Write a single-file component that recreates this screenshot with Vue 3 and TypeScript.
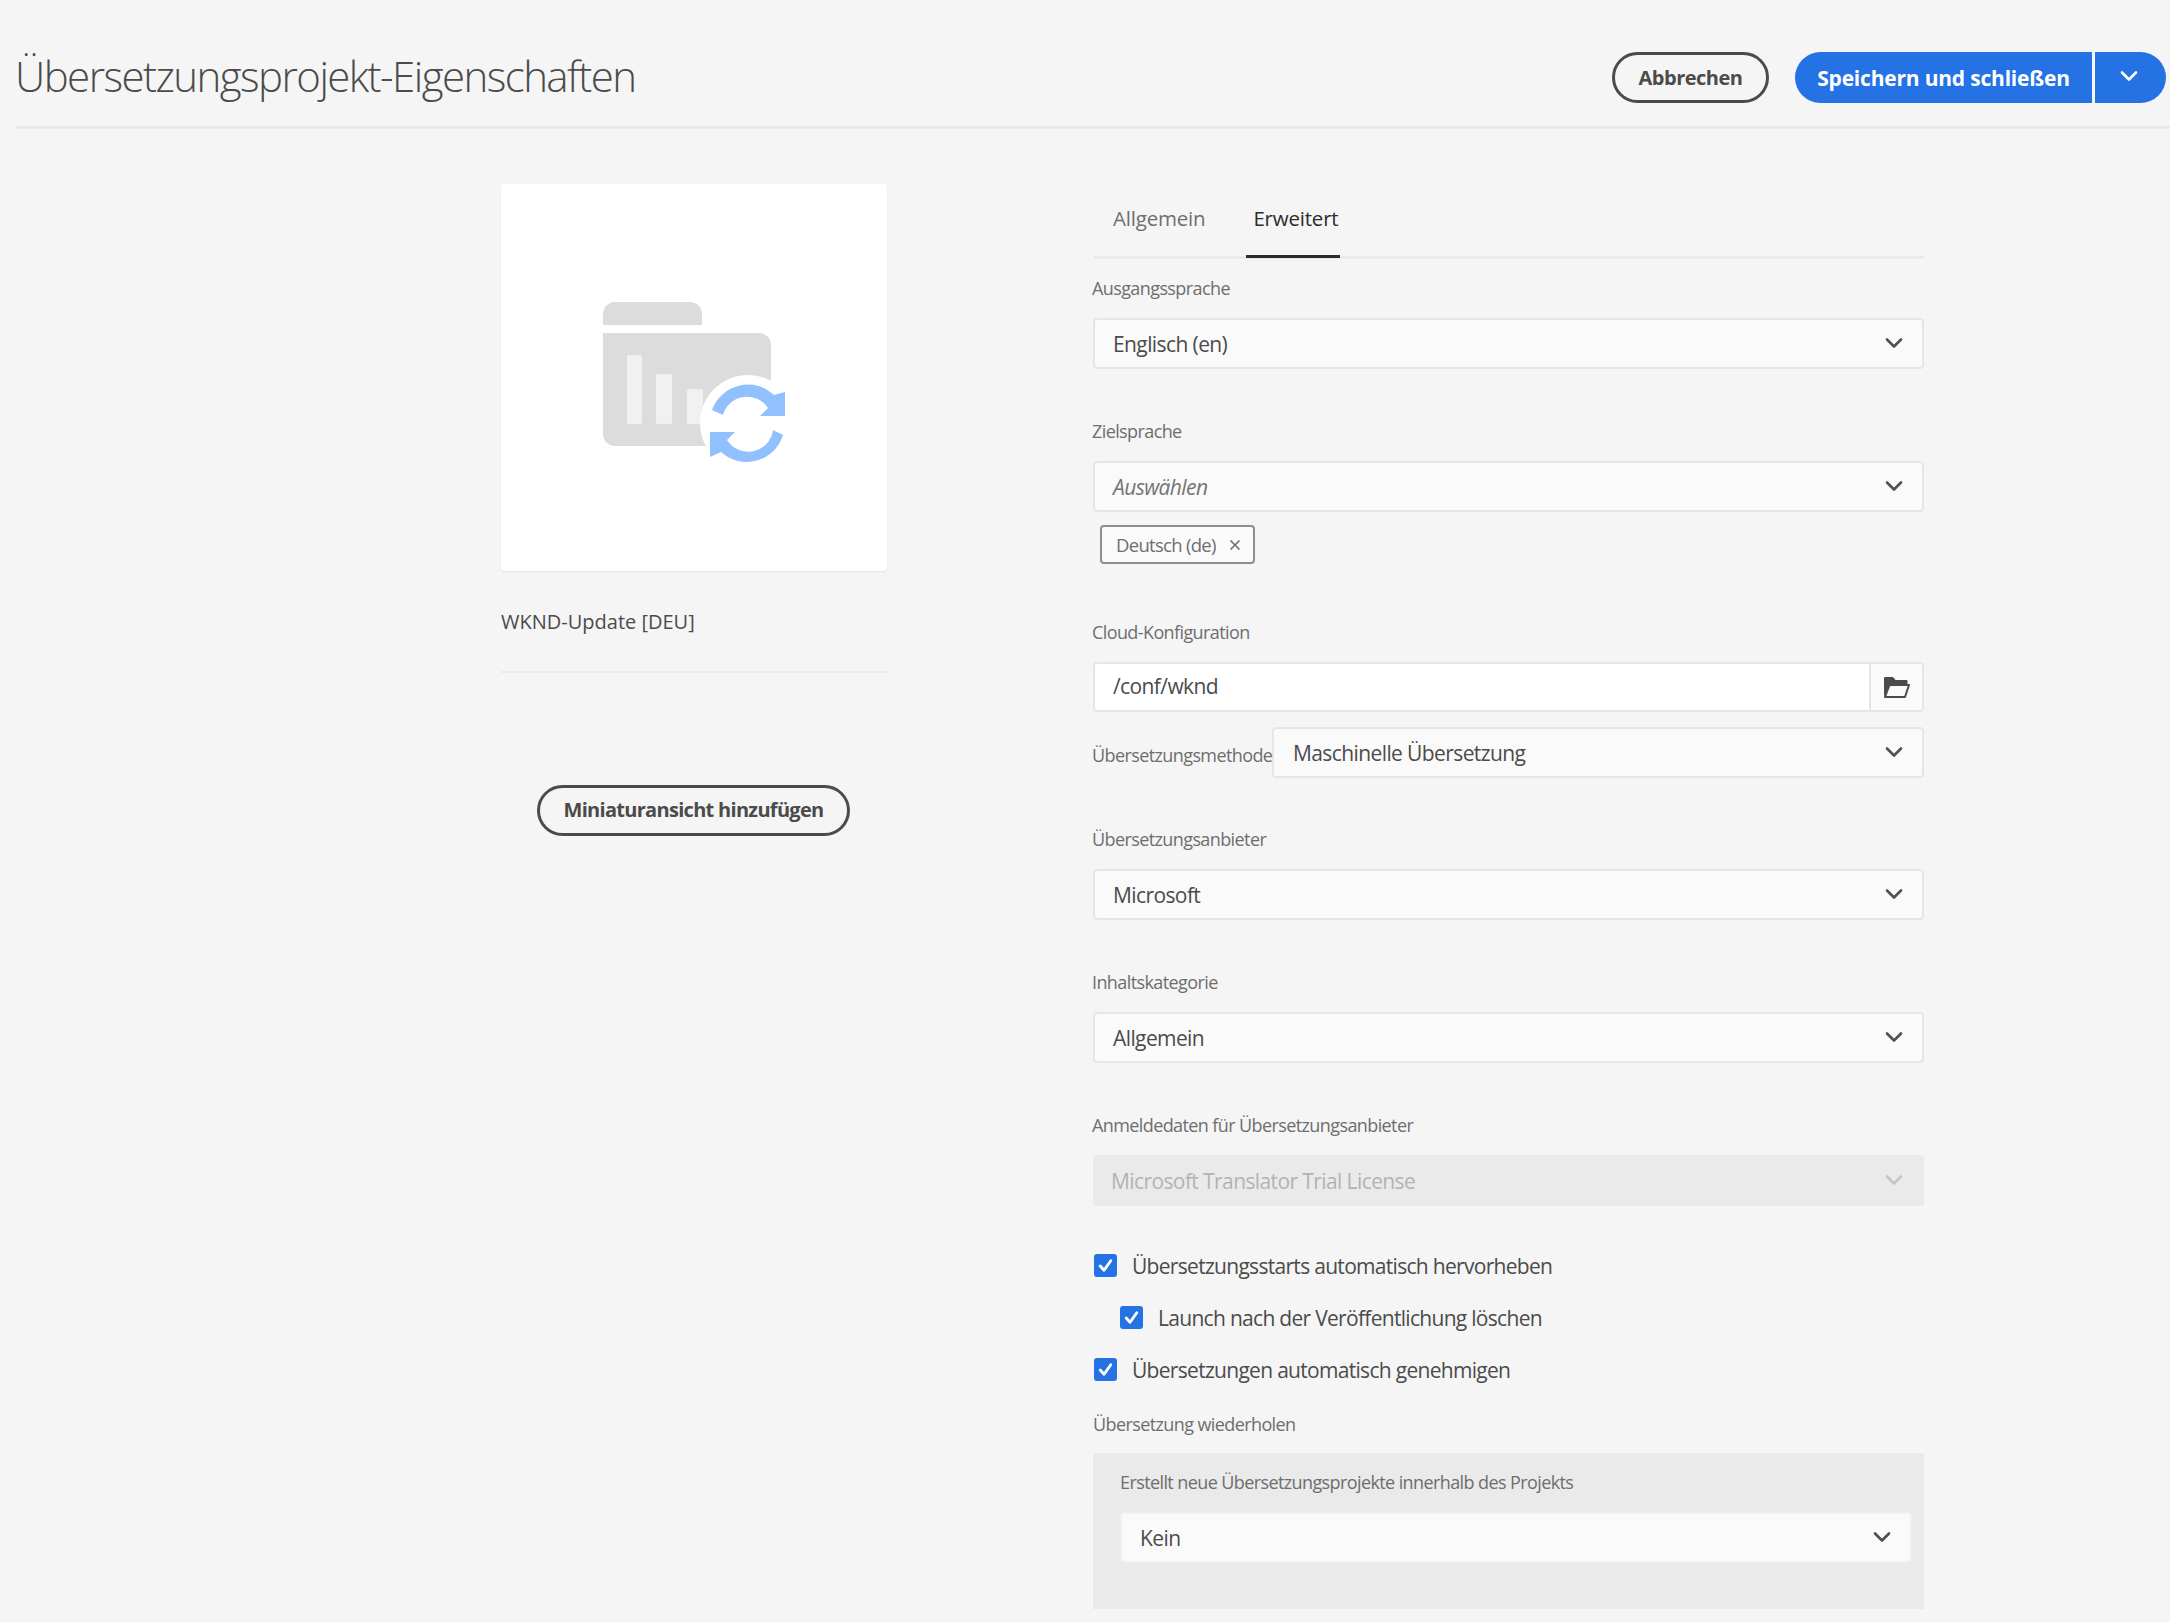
<template>
  <div class="page">
    <svg class="defs" width="0" height="0" aria-hidden="true">
      <symbol id="chevron" viewBox="0 0 18 12">
        <path d="M2 2.5 L9 9.5 L16 2.5" fill="none" stroke="currentColor" stroke-width="2.6" stroke-linecap="round" stroke-linejoin="round" />
      </symbol>
      <symbol id="check" viewBox="0 0 24 24">
        <path d="M6.5 12.5 L10.5 17 L17.5 7" fill="none" stroke="#fff" stroke-width="3" stroke-linecap="round" stroke-linejoin="round" />
      </symbol>
    </svg>

    <header class="topbar">
      <h1 class="title">Übersetzungsprojekt-Eigenschaften</h1>
      <div class="actions">
        <button class="btn btn-outline">Abbrechen</button>
        <div class="split">
          <button class="btn-primary">Speichern und schließen</button>
          <button class="btn-primary btn-caret">
            <svg width="18" height="12"><use href="#chevron" /></svg>
          </button>
        </div>
      </div>
    </header>

    <main class="content">
      <section class="side">
        <div class="thumb">
          <svg width="180" height="160" viewBox="0 0 180 160">
            <path d="M0 22 a12 12 0 0 1 12 -12 h75 a12 12 0 0 1 12 12 v11 h-99 z" fill="#dcdcdc" />
            <path d="M0 41 h156 a12 12 0 0 1 12 12 v89 a12 12 0 0 1 -12 12 h-144 a12 12 0 0 1 -12 -12 z" fill="#dcdcdc" />
            <rect x="24" y="63" width="15" height="69" rx="2" fill="#f1f1f1" />
            <rect x="53" y="82" width="16" height="50" rx="2" fill="#f1f1f1" />
            <rect x="84" y="97" width="16" height="35" rx="2" fill="#f1f1f1" />
            <circle cx="145" cy="131" r="48" fill="#fff" />
            <path d="M109 118 A38 38 0 0 1 171 103 L182 100 V124 H157 L165 116 A25 25 0 0 0 120 123 Z" fill="#91c0ff" />
            <path d="M180 143 A38 38 0 0 1 118 160 L107 165 V140 H132 L124 148 A25 25 0 0 0 170 138 Z" fill="#91c0ff" />
          </svg>
        </div>
        <p class="thumb-name">WKND-Update [DEU]</p>
        <div class="side-rule"></div>
        <button class="btn btn-outline btn-thumb">Miniaturansicht hinzufügen</button>
      </section>

      <section class="form">
        <nav class="tabs">
          <span class="tab">Allgemein</span>
          <span class="tab tab-active">Erweitert</span>
        </nav>

        <div class="field">
          <label>Ausgangssprache</label>
          <div class="select"><span>Englisch (en)</span><svg class="chev"><use href="#chevron" /></svg></div>
        </div>

        <div class="field field-tags">
          <label>Zielsprache</label>
          <div class="select"><span class="placeholder">Auswählen</span><svg class="chev"><use href="#chevron" /></svg></div>
          <div class="tag">
            Deutsch (de)
            <svg width="12" height="12" viewBox="0 0 12 12"><path d="M1.5 1.5 L10.5 10.5 M10.5 1.5 L1.5 10.5" stroke="#6e6e6e" stroke-width="1.6" /></svg>
          </div>
        </div>

        <div class="field field-cloud">
          <label>Cloud-Konfiguration</label>
          <div class="pathfield">
            <span class="path-value">/conf/wknd</span>
            <span class="path-btn">
              <svg width="28" height="24" viewBox="0 0 28 24">
                <path d="M1 22 V3 a1 1 0 0 1 1 -1 h8 l2.5 3 h11 a1 1 0 0 1 1 1 v3 H7 z" fill="#4b4b4b" />
                <path d="M2 22 L6.5 10 H26 L22 22 z" fill="none" stroke="#4b4b4b" stroke-width="2" stroke-linejoin="round" />
              </svg>
            </span>
          </div>
        </div>

        <div class="method">
          <label>Übersetzungsmethode</label>
          <div class="select"><span>Maschinelle Übersetzung</span><svg class="chev"><use href="#chevron" /></svg></div>
        </div>

        <div v-for="f in plainFields" :key="f.label" class="field">
          <label>{{ f.label }}</label>
          <div class="select"><span>{{ f.value }}</span><svg class="chev"><use href="#chevron" /></svg></div>
        </div>

        <div class="field">
          <label>Anmeldedaten für Übersetzungsanbieter</label>
          <div class="select select-disabled"><span>Microsoft Translator Trial License</span><svg class="chev"><use href="#chevron" /></svg></div>
        </div>

        <div class="checks">
          <div v-for="c in checks" :key="c.text" class="check" :class="{ nested: c.nested }">
            <span class="box"><svg width="23" height="23"><use href="#check" /></svg></span>
            <span>{{ c.text }}</span>
          </div>
        </div>

        <label class="repeat-label">Übersetzung wiederholen</label>
        <div class="repeat">
          <label>Erstellt neue Übersetzungsprojekte innerhalb des Projekts</label>
          <div class="select select-white"><span>Kein</span><svg class="chev"><use href="#chevron" /></svg></div>
        </div>
      </section>
    </main>
  </div>
</template>

<script setup lang="ts">
const plainFields = [
  { label: 'Übersetzungsanbieter', value: 'Microsoft' },
  { label: 'Inhaltskategorie', value: 'Allgemein' }
]

const checks = [
  { text: 'Übersetzungsstarts automatisch hervorheben', nested: false },
  { text: 'Launch nach der Veröffentlichung löschen', nested: true },
  { text: 'Übersetzungen automatisch genehmigen', nested: false }
]
</script>

<style>
html,
body {
  margin: 0;
  background: #f5f5f5;
}
</style>

<style scoped>
.page {
  width: 2170px;
  height: 1622px;
  overflow: hidden;
  background: #f5f5f5;
  font-family: "Open Sans", "Liberation Sans", sans-serif;
  color: #4b4b4b;
  box-sizing: border-box;
}

.defs {
  position: absolute;
}

.topbar {
  display: flex;
  align-items: flex-start;
  justify-content: space-between;
  height: 74px;
  margin-left: 15px;
  padding: 52px 4px 0 0;
  border-bottom: 3px solid #eaeaea;
}

.title {
  margin: -4px 0 0;
  font-size: 42px;
  font-weight: 300;
  letter-spacing: -1.55px;
  color: #4b4b4b;
  line-height: 56px;
}

.actions {
  display: flex;
  gap: 26px;
  align-items: center;
}

.btn {
  font-family: inherit;
  background: transparent;
  border: 3px solid #4b4b4b;
  border-radius: 26px;
  font-weight: 700;
  font-size: 20px;
  letter-spacing: -0.5px;
  color: #4b4b4b;
  height: 51px;
  width: 157px;
  padding: 0;
  box-sizing: border-box;
}

.split {
  display: flex;
  gap: 3px;
}

.btn-primary {
  font-family: inherit;
  border: none;
  background: #2472e4;
  color: #fff;
  font-weight: 700;
  font-size: 21px;
  letter-spacing: -0.2px;
  height: 51px;
  width: 297px;
  padding: 0;
  border-radius: 26px 0 0 26px;
}

.btn-caret {
  width: 71px;
  border-radius: 0 26px 26px 0;
  display: flex;
  align-items: center;
  justify-content: center;
  padding: 0 3px 4px 0;
}

.content {
  display: flex;
  padding-top: 55px;
  padding-left: 501px;
}

.side {
  width: 386px;
  margin-right: 205px;
}

.thumb {
  width: 386px;
  height: 387px;
  background: #fff;
  border-radius: 4px;
  box-shadow: 0 1px 2px rgba(0, 0, 0, 0.08);
  display: flex;
  justify-content: center;
  padding: 108px 0 0 0;
  box-sizing: border-box;
}

.thumb svg {
  margin-left: -3px;
  overflow: visible;
}

.thumb-name {
  margin: 35px 0 0;
  font-size: 20px;
  line-height: 32px;
  letter-spacing: 0;
}

.side-rule {
  height: 2px;
  background: #eaeaea;
  margin-top: 33px;
}

.btn-thumb {
  display: block;
  width: 313px;
  margin: 112px 0 0 36px;
  letter-spacing: -0.7px;
  padding-bottom: 2px;
}

.form {
  width: 832px;
}

.tabs {
  display: flex;
  height: 74px;
  border-bottom: 3px solid #eaeaea;
  box-sizing: border-box;
  margin-top: 1px;
  margin-left: 1px;
  padding-left: 20px;
  gap: 48px;
}

.tab {
  font-size: 20.5px;
  line-height: 68px;
  letter-spacing: -0.2px;
  color: #6e6e6e;
  position: relative;
  margin-top: -1px;
  height: 72px;
}

.tab-active {
  color: #2c2c2c;
}

.tab-active::after {
  content: "";
  position: absolute;
  left: -7px;
  right: -2px;
  bottom: -2px;
  height: 3px;
  background: #2c2c2c;
}

label {
  display: block;
  font-size: 18px;
  line-height: 24px;
  letter-spacing: -0.6px;
  color: #6e6e6e;
}

.field {
  margin-top: 17px;
  margin-bottom: 50px;
}

.field label {
  margin-bottom: 18px;
}

.field + .field {
  margin-top: 0;
}

.select {
  display: flex;
  align-items: center;
  justify-content: space-between;
  height: 51px;
  margin-left: 1px;
  padding: 0 19px 0 18px;
  background: #fafafa;
  border: 2px solid #e6e6e6;
  border-radius: 4px;
  font-size: 21px;
  letter-spacing: -0.6px;
  color: #4b4b4b;
  box-sizing: border-box;
}

.placeholder {
  font-style: italic;
  color: #747474;
}

.chev {
  width: 18px;
  height: 12px;
  color: #505050;
  margin-bottom: 2px;
}

.tag {
  display: inline-flex;
  align-items: center;
  gap: 13px;
  height: 39px;
  margin: 13px 0 0 8px;
  padding: 0 12px 0 14px;
  border: 2px solid #8e8e8e;
  border-radius: 4px;
  background: #fafafa;
  font-size: 18.5px;
  letter-spacing: -0.7px;
  color: #6e6e6e;
  box-sizing: border-box;
}

.field-tags {
  margin-bottom: 56px;
}

.field-cloud {
  margin-bottom: 15px;
}

.pathfield {
  display: flex;
  height: 50px;
  margin-left: 1px;
  border: 2px solid #e6e6e6;
  border-radius: 4px;
  box-sizing: border-box;
  background: #fff;
}

.path-value {
  flex: 1;
  padding-left: 18px;
  font-size: 21px;
  line-height: 44px;
  letter-spacing: -0.6px;
}

.path-btn {
  width: 51px;
  border-left: 2px solid #e6e6e6;
  background: #fafafa;
  border-radius: 0 3px 3px 0;
  display: flex;
  align-items: center;
  justify-content: center;
}

.method {
  display: flex;
  align-items: center;
  height: 51px;
  margin-bottom: 49px;
}

.method label {
  width: 180px;
  white-space: nowrap;
  position: relative;
  top: 2px;
}

.method .select {
  flex: 1;
  margin-left: 0;
  padding-left: 19px;
}

.select-disabled {
  background: #eaeaea;
  border-color: #eaeaea;
  color: #b3b3b3;
  padding-left: 16px;
}

.select-disabled .chev {
  color: #c4c4c4;
}

.checks {
  display: flex;
  flex-direction: column;
  gap: 29px;
  margin-top: -2px;
}

.check {
  display: flex;
  align-items: center;
  gap: 15px;
  height: 23px;
  margin-left: 2px;
  font-size: 21px;
  letter-spacing: -0.7px;
}

.check.nested {
  margin-left: 28px;
}

.box {
  width: 23px;
  height: 23px;
  border-radius: 3px;
  background: #2472e4;
  display: block;
  flex: none;
}

.repeat-label {
  margin-top: 31px;
  margin-left: 1px;
}

.repeat {
  height: 156px;
  margin: 17px 0 0 1px;
  padding: 17px 12px 0 27px;
  background: #eaeaea;
  box-sizing: border-box;
}

.repeat label {
  margin-bottom: 18px;
}

.select-white {
  margin-left: 0;
  background: #fafafa;
  border-color: #f0f0f0;
}
</style>
